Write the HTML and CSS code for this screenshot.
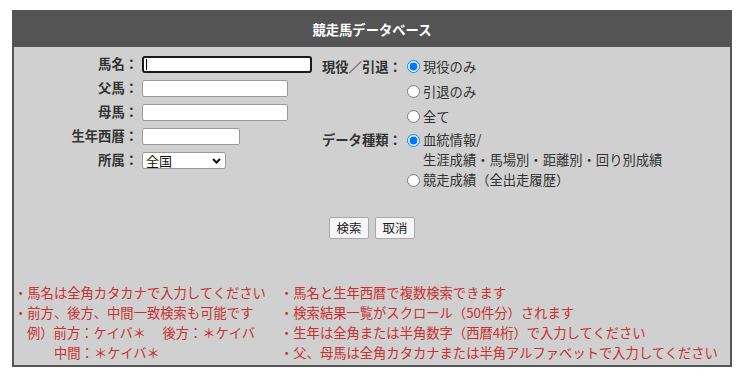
FILE: index.html
```html
<!DOCTYPE html>
<html lang="ja">
<head>
<meta charset="utf-8">
<title>競走馬データベース</title>
<link rel="stylesheet" href="styles.css">
</head>
<body>
<div class="db">
  <div class="db-head">競走馬データベース</div>
  <form class="db-form">
    <div class="fields">
      <div class="left">
        <label class="lbl">馬名：</label><input class="txt txt-name is-focus" type="text">
        <label class="lbl">父馬：</label><input class="txt txt-mid" type="text">
        <label class="lbl">母馬：</label><input class="txt txt-mid" type="text">
        <label class="lbl">生年西暦：</label><input class="txt txt-year" type="text">
        <label class="lbl">所属：</label>
        <span class="sel-wrap"><select class="sel"><option>全国</option><option>中央</option><option>地方</option></select><svg class="chev" width="9" height="6" viewBox="0 0 9 6"><path d="M1 1 L4.5 4.5 L8 1" fill="none" stroke="#111" stroke-width="2"/></svg></span>
      </div>
      <div class="right">
        <div class="lbl2 lbl2-a">現役／引退：</div>
        <div class="opts opts-a">
          <label class="opt"><input type="radio" name="st" checked>現役のみ</label>
          <label class="opt"><input type="radio" name="st">引退のみ</label>
          <label class="opt"><input type="radio" name="st">全て</label>
        </div>
        <div class="lbl2 lbl2-b">データ種類：</div>
        <div class="opts opts-b">
          <label class="opt opt-multi"><input type="radio" name="kind" checked><span>血統情報/<br>生涯成績・馬場別・距離別・回り別成績</span></label>
          <label class="opt"><input type="radio" name="kind">競走成績（全出走履歴）</label>
        </div>
      </div>
    </div>
    <div class="btns"><button type="button" class="btn">検索</button><button type="button" class="btn">取消</button></div>
  </form>
  <div class="notes">
    <div class="col col-l">
      <div>・馬名は全角カタカナで入力してください</div>
      <div>・前方、後方、中間一致検索も可能です</div>
      <div class="ind1">例）前方：ケイバ＊　 後方：＊ケイバ</div>
      <div class="ind3">中間：＊ケイバ＊</div>
    </div>
    <div class="col col-r">
      <div>・馬名と生年西暦で複数検索できます</div>
      <div>・検索結果一覧がスクロール（50件分）されます</div>
      <div>・生年は全角または半角数字（西暦4桁）で入力してください</div>
      <div>・父、母馬は全角カタカナまたは半角アルファベットで入力してください</div>
    </div>
  </div>
</div>
</body>
</html>
```
FILE: styles.css
```css
html, body {
  margin: 0;
  padding: 0;
  background: #ffffff;
}
body {
  font-family: "Noto Sans CJK JP", "Noto Sans", sans-serif;
  font-size: 13.3px;
  color: #333;
}
.db {
  box-sizing: border-box;
  width: 720px;
  margin: 10px 0 0 12px;
  border: 2px solid #555;
  background: #d0d0d0;
  padding-bottom: 2px;
}
.db-head {
  height: 35px;
  background: #545454;
  color: #fff;
  font-weight: bold;
  text-align: center;
  line-height: 35px;
}
.db-form {
  margin: 0;
  padding-top: 5px;
}
.fields {
  display: flex;
  align-items: flex-start;
}
.left {
  display: grid;
  grid-template-columns: 124px 170px;
  grid-auto-rows: 24px;
  column-gap: 4px;
  align-items: center;
  justify-items: start;
}
.lbl {
  justify-self: end;
  font-weight: bold;
  color: #333;
  line-height: 24px;
  white-space: nowrap;
}
.txt {
  box-sizing: border-box;
  height: 17px;
  margin: 0;
  padding: 0 2px;
  border: 1px solid #9a9a9a;
  border-radius: 2px;
  background: #fff;
  font: inherit;
  font-size: 12px;
  outline: none;
}
.txt-name { width: 170px; }
.txt-mid { width: 146px; }
.txt-year { width: 98px; }
.is-focus {
  border: 2px solid #1a1a1a;
  border-radius: 3px;
  background: #fff linear-gradient(#000, #000) no-repeat 2px 1px / 1px 11px;
}
.sel-wrap {
  position: relative;
  display: block;
  width: 84px;
  height: 17px;
}
.sel {
  -webkit-appearance: none;
  appearance: none;
  box-sizing: border-box;
  display: block;
  width: 84px;
  height: 17px;
  margin: 0;
  padding: 0 0 0 3px;
  border: 1px solid #9a9a9a;
  border-radius: 2px;
  background: #fff;
  font-family: inherit;
  font-size: 13px;
  line-height: 15px;
  color: #111;
}
.chev {
  position: absolute;
  right: 5px;
  top: 6px;
  pointer-events: none;
}
.right {
  margin-left: 10px;
  display: grid;
  grid-template-columns: 80px auto;
  align-items: start;
  padding-top: 2px;
}
.lbl2 {
  font-weight: bold;
  color: #333;
  white-space: nowrap;
}
.lbl2-a { line-height: 25px; }
.lbl2-b { line-height: 20px; margin-top: 1px; }
.opts {
  display: flex;
  flex-direction: column;
}
.opts-a { line-height: 25px; }
.opts-b { line-height: 20px; margin-top: 1px; }
.opt {
  display: flex;
  align-items: center;
  color: #333;
  white-space: nowrap;
}
.opt input {
  width: 13px;
  height: 13px;
  margin: 0 3px 0 5px;
  flex: none;
}
.opt-multi {
  align-items: flex-start;
}
.opt-multi input {
  margin-top: 4px;
}
.opt-multi span {
  display: block;
}
.btns {
  display: flex;
  justify-content: center;
  gap: 6px;
  margin-top: 27px;
}
.btn {
  box-sizing: border-box;
  width: 40px;
  height: 22px;
  padding: 0;
  border: 1px solid #a8a8a8;
  border-radius: 2px;
  background: #f6f6f6;
  color: #222;
  font-family: inherit;
  font-size: 12.5px;
  line-height: 20px;
}
.notes {
  display: flex;
  margin-top: 44px;
  color: #c8312f;
  line-height: 20px;
  white-space: nowrap;
}
.col-l {
  width: 266px;
}
.ind1 { padding-left: 13px; }
.ind3 { padding-left: 40px; }
```
